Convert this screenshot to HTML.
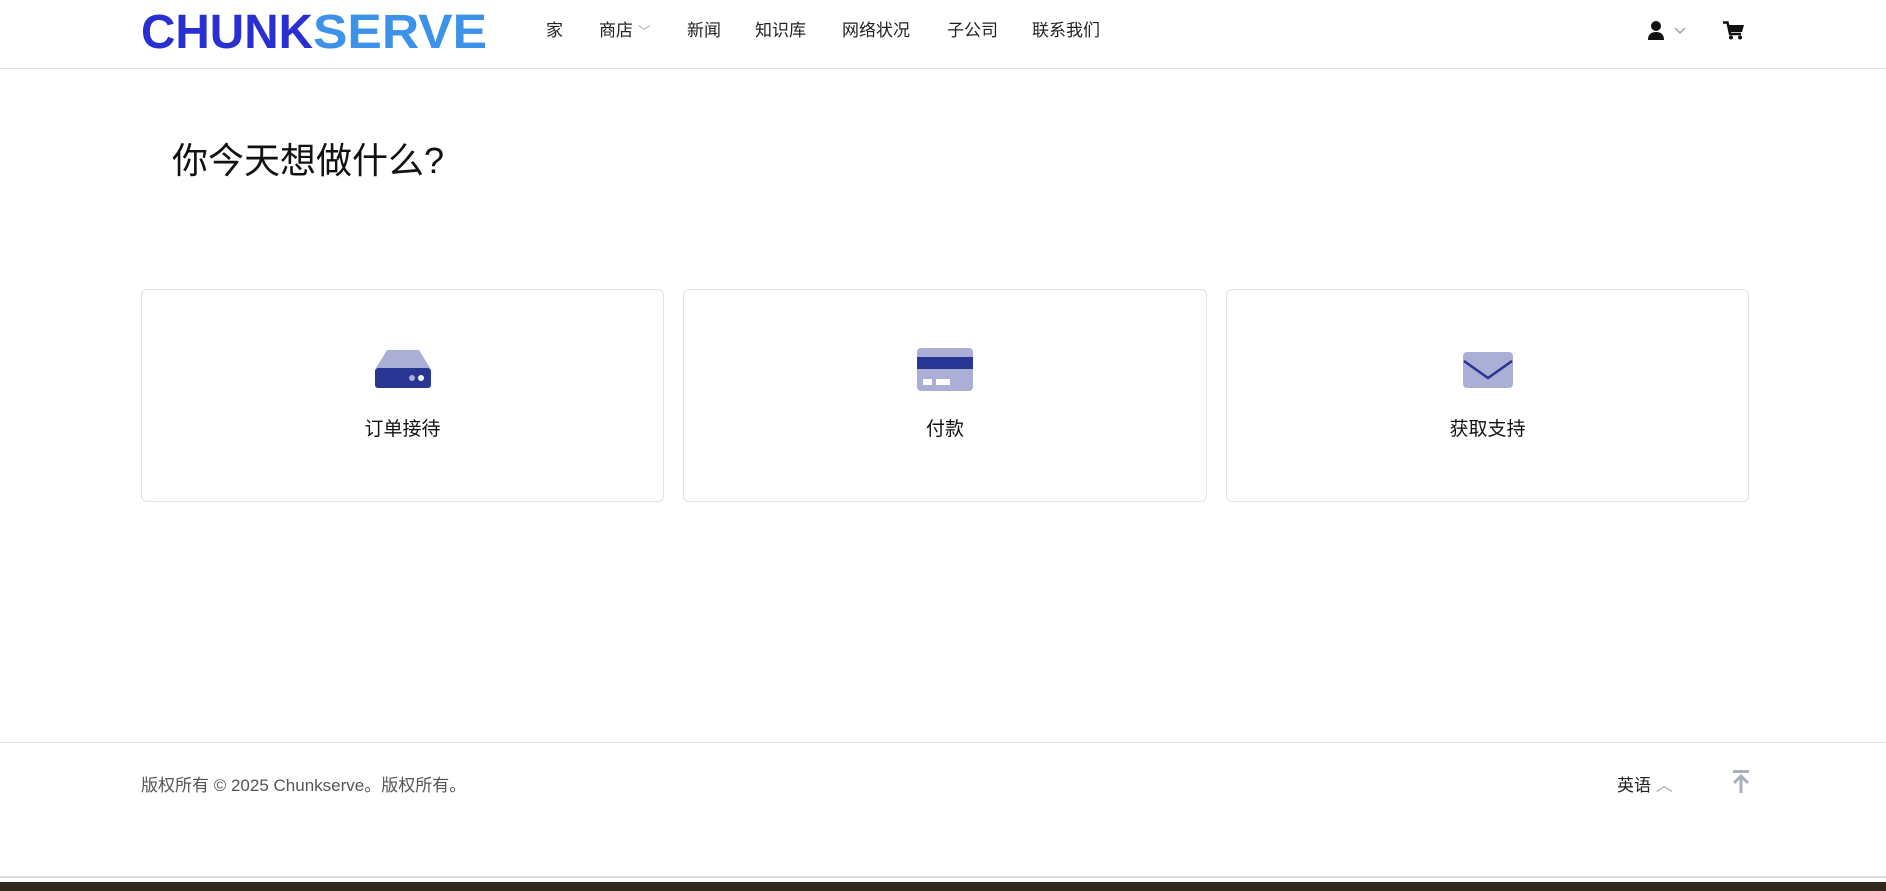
<!DOCTYPE html>
<html><head><meta charset="utf-8"><style>
*{margin:0;padding:0;box-sizing:border-box}
body{width:1886px;height:891px;background:#fff;font-family:"Liberation Sans","Noto Sans CJK SC",sans-serif;color:#111;position:relative;overflow:hidden}
.hdr{position:absolute;left:0;top:0;width:1886px;height:69px;border-bottom:1px solid #e5e5e5}
.nav{position:absolute;top:16px;font-size:17px;color:#222}
.card{position:absolute;top:289px;height:213px;border:1px solid #e2e2e2;border-radius:6px;background:#fff}
.card .lbl{position:absolute;top:124px;width:100%;text-align:center;font-size:19px;color:#111}
.card svg{position:absolute;left:50%;top:60px;transform:translateX(-50%)}
</style></head><body>
<div class="hdr">
<svg style="position:absolute;left:141px;top:12px" width="350" height="40">
<text x="0" y="36" font-family="Liberation Sans" font-weight="bold" font-size="48" textLength="172" lengthAdjust="spacingAndGlyphs" fill="#2a2fd1">CHUNK</text>
<text x="172" y="36" font-family="Liberation Sans" font-weight="bold" font-size="48" textLength="174" lengthAdjust="spacingAndGlyphs" fill="#3b92e8">SERVE</text>
</svg>
<div class="nav" style="left:546px">家</div>
<div class="nav" style="left:599px">商店 <span style="color:#aaa;font-size:13px">﹀</span></div>
<div class="nav" style="left:687px">新闻</div>
<div class="nav" style="left:755px">知识库</div>
<div class="nav" style="left:842px">网络状况</div>
<div class="nav" style="left:947px">子公司</div>
<div class="nav" style="left:1032px">联系我们</div>
<svg style="position:absolute;left:1648px;top:21px" width="42" height="19" viewBox="0 0 42 19">
<circle cx="8" cy="5" r="5" fill="#111"/><path d="M0 19 Q0 11 8 11 Q16 11 16 19Z" fill="#111"/>
<path d="M27 7 L32 12 L37 7" stroke="#aaa" stroke-width="1.6" fill="none"/></svg>
<svg style="position:absolute;left:1723px;top:21px" width="22" height="19" viewBox="0 0 22 19">
<path d="M0 1.5 H4.5 L7 13 H18" stroke="#111" stroke-width="2.4" fill="none"/><path d="M5.5 4 H21 L19 11 H7Z" fill="#111"/>
<circle cx="8" cy="16.5" r="2" fill="#111"/><circle cx="17" cy="16.5" r="2" fill="#111"/></svg>
</div>
<div style="position:absolute;left:172px;top:132px;font-size:36px;color:#111">你今天想做什么?</div>
<div class="card" style="left:141px;width:523px">
<svg width="56" height="40" viewBox="0 0 56 40"><path d="M12 0 H44 L55 18 H1Z" fill="#abaed5"/><rect x="0" y="18" width="56" height="20" rx="3" fill="#283593"/><circle cx="37" cy="28" r="3" fill="#abaed5"/><circle cx="46" cy="28" r="3" fill="#fff"/></svg>
<div class="lbl">订单接待</div></div>
<div class="card" style="left:683px;width:524px">
<svg width="56" height="44" viewBox="0 0 56 44" style="top:58px"><rect width="56" height="43" rx="4" fill="#abaed5"/><rect y="9" width="56" height="12" fill="#283593"/><rect x="6" y="31" width="9" height="6" fill="#fff"/><rect x="19" y="31" width="14" height="6" fill="#fff"/></svg>
<div class="lbl">付款</div></div>
<div class="card" style="left:1226px;width:523px">
<svg width="50" height="38" viewBox="0 0 50 38" style="top:62px"><rect width="50" height="36" rx="4" fill="#abaed5"/><path d="M1 9 L25 26 L49 9" stroke="#283593" stroke-width="2.5" fill="none"/></svg>
<div class="lbl">获取支持</div></div>
<div style="position:absolute;left:0;top:742px;width:1886px;border-top:1px solid #e5e5e5"></div>
<div style="position:absolute;left:141px;top:771px;font-size:17px;color:#555">版权所有 © 2025 Chunkserve。版权所有。</div>
<div style="position:absolute;left:1617px;top:771px;font-size:17px;color:#222">英语 <span style="color:#aab">︿</span></div>
<svg style="position:absolute;left:1732px;top:770px" width="18" height="24" viewBox="0 0 18 24"><rect x="1" y="0" width="16" height="3" fill="#aab0bb"/><path d="M9 23 V7 M2 13 L9 6 L16 13" stroke="#aab0bb" stroke-width="3" fill="none"/></svg>
<div style="position:absolute;left:0;top:876px;width:1886px;height:2px;background:#ddd"></div>
<div style="position:absolute;left:0;top:882px;width:1886px;height:9px;background:#2f2a1b"></div>
</body></html>
